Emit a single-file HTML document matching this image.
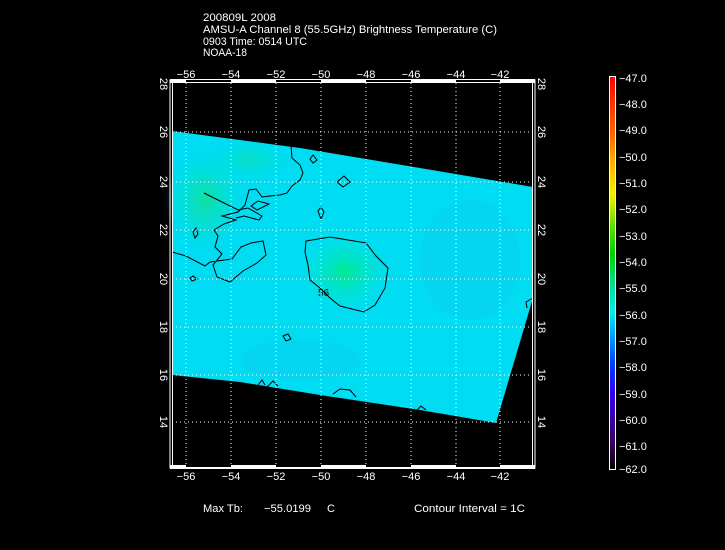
<!DOCTYPE html>
<html><head><style>
body{margin:0;background:#000;}
svg{display:block}
text{font-family:"Liberation Sans",sans-serif;fill:#fff;font-size:11px}
</style></head><body>
<svg width="725" height="550" viewBox="0 0 725 550" xmlns="http://www.w3.org/2000/svg">
<defs>
<linearGradient id="cb" x1="0" y1="1" x2="0" y2="0">
<stop offset="0" stop-color="#000000"/>
<stop offset="0.07" stop-color="#3a0060"/>
<stop offset="0.2" stop-color="#3000ff"/>
<stop offset="0.27" stop-color="#0040ff"/>
<stop offset="0.34" stop-color="#00a0ff"/>
<stop offset="0.4" stop-color="#00f0f0"/>
<stop offset="0.47" stop-color="#00e090"/>
<stop offset="0.55" stop-color="#00d000"/>
<stop offset="0.62" stop-color="#60e000"/>
<stop offset="0.7" stop-color="#f0f000"/>
<stop offset="0.78" stop-color="#ffb000"/>
<stop offset="0.86" stop-color="#ff6000"/>
<stop offset="1" stop-color="#ff0000"/>
</linearGradient>
<radialGradient id="blob" cx="0.5" cy="0.5" r="0.5">
<stop offset="0" stop-color="#00e890"/><stop offset="1" stop-color="#00e8c8" stop-opacity="0"/>
</radialGradient>
<radialGradient id="blob2" cx="0.5" cy="0.5" r="0.5">
<stop offset="0" stop-color="#10e0a0"/><stop offset="1" stop-color="#00e0d0" stop-opacity="0"/>
</radialGradient>
</defs>
<text x="203" y="21" textLength="73" lengthAdjust="spacingAndGlyphs">200809L 2008</text>
<text x="203" y="33" textLength="294" lengthAdjust="spacingAndGlyphs">AMSU-A Channel 8 (55.5GHz) Brightness Temperature (C)</text>
<text x="203" y="45" textLength="104" lengthAdjust="spacingAndGlyphs">0903 Time: 0514 UTC</text>
<text x="203" y="56" textLength="44" lengthAdjust="spacingAndGlyphs">NOAA-18</text>

<polygon points="172,131 300,148 420,168 533,187 533,298 496,423 420,410 320,395 240,382 172,375" fill="#00dcf2"/>
<ellipse cx="345" cy="272" rx="45" ry="38" fill="url(#blob)"/>
<ellipse cx="205" cy="200" rx="40" ry="50" fill="url(#blob2)"/>
<ellipse cx="250" cy="160" rx="40" ry="20" fill="url(#blob2)" opacity="0.6"/>
<ellipse cx="470" cy="260" rx="50" ry="60" fill="#10c8f0" opacity="0.35"/>
<ellipse cx="300" cy="360" rx="60" ry="20" fill="#10c8f0" opacity="0.35"/>

<g fill="none" stroke="#000" stroke-width="1">
<polygon points="306,241 330,237 366,243 376,256 388,268 385,288 375,305 364,312 352,309 340,306 330,298 320,288 310,280 308,265 305,252"/>
<polyline points="172,252 186,256 205,266 210,262 232,259 241,247 251,243 263,241 266,255 257,263 243,271 230,282 217,277 213,265 222,254 215,247 218,236 214,230 224,224 236,220 222,216 238,212 245,205 249,190 256,189 262,197 270,196 280,195 287,193 292,186 300,180 303,173 300,165 292,158 291,146"/>
<polyline points="204,193 222,202 238,210 248,208 262,216 259,220 244,216 236,218"/>
<polygon points="251,206 258,201 269,204 257,210"/>
<polygon points="310,159 313,155 317,160 313,163"/>
<polygon points="318,211 321,207 324,212 321,219"/>
<polygon points="193,232 196,228 198,234 195,238"/>
<polygon points="190,278 193,276 197,279 192,281"/>
<polygon points="283,336 288,334 291,339 286,341"/>
<polygon points="337,182 344,176 350,182 343,187"/>
<polyline points="258,385 262,380 265,385"/>
<polyline points="267,387 273,381 278,386"/>
<polyline points="333,394 340,389 350,390 356,397"/>
<polyline points="417,410 421,406 426,410"/>
<polyline points="533,298 526,302 527,308"/>
</g>
<text x="318" y="296" style="font-size:10px;fill:#000">56</text>

<g stroke="#fff" stroke-dasharray="1,3" stroke-width="1">
<line x1="186" y1="83" x2="186" y2="465"/><line x1="231" y1="83" x2="231" y2="465"/>
<line x1="276" y1="83" x2="276" y2="465"/><line x1="321" y1="83" x2="321" y2="465"/>
<line x1="366" y1="83" x2="366" y2="465"/><line x1="411" y1="83" x2="411" y2="465"/>
<line x1="456" y1="83" x2="456" y2="465"/><line x1="500" y1="83" x2="500" y2="465"/>
<line x1="172" y1="132" x2="533" y2="132"/><line x1="172" y1="182" x2="533" y2="182"/>
<line x1="172" y1="230" x2="533" y2="230"/><line x1="172" y1="279" x2="533" y2="279"/>
<line x1="172" y1="327" x2="533" y2="327"/><line x1="172" y1="375" x2="533" y2="375"/>
<line x1="172" y1="422" x2="533" y2="422"/>
</g>
<rect x="170" y="80" width="365" height="388" fill="none" stroke="#fff" stroke-width="1"/>
<rect x="172.5" y="82.5" width="360" height="383" fill="none" stroke="#fff" stroke-width="1"/>
<rect x="170" y="465" width="365" height="4" fill="#fff"/>
<rect x="170" y="79" width="365" height="4" fill="#fff"/>
<g stroke="#000" stroke-width="2">
<line x1="186" y1="466" x2="231" y2="466"/><line x1="276" y1="466" x2="321" y2="466"/>
<line x1="366" y1="466" x2="411" y2="466"/><line x1="456" y1="466" x2="500" y2="466"/>
<line x1="186" y1="81" x2="231" y2="81"/><line x1="276" y1="81" x2="321" y2="81"/>
<line x1="366" y1="81" x2="411" y2="81"/><line x1="456" y1="81" x2="500" y2="81"/>
</g>
<g text-anchor="middle">
<text x="186" y="78">−56</text><text x="231" y="78">−54</text><text x="276" y="78">−52</text><text x="321" y="78">−50</text>
<text x="366" y="78">−48</text><text x="411" y="78">−46</text><text x="456" y="78">−44</text><text x="500" y="78">−42</text>
<text x="186" y="480">−56</text><text x="231" y="480">−54</text><text x="276" y="480">−52</text><text x="321" y="480">−50</text>
<text x="366" y="480">−48</text><text x="411" y="480">−46</text><text x="456" y="480">−44</text><text x="500" y="480">−42</text>
</g>
<g text-anchor="middle">
<text transform="translate(160,84) rotate(90)">28</text><text transform="translate(160,132) rotate(90)">26</text>
<text transform="translate(160,182) rotate(90)">24</text><text transform="translate(160,230) rotate(90)">22</text>
<text transform="translate(160,279) rotate(90)">20</text><text transform="translate(160,327) rotate(90)">18</text>
<text transform="translate(160,375) rotate(90)">16</text><text transform="translate(160,422) rotate(90)">14</text>
<text transform="translate(538,84) rotate(90)">28</text><text transform="translate(538,132) rotate(90)">26</text>
<text transform="translate(538,182) rotate(90)">24</text><text transform="translate(538,230) rotate(90)">22</text>
<text transform="translate(538,279) rotate(90)">20</text><text transform="translate(538,327) rotate(90)">18</text>
<text transform="translate(538,375) rotate(90)">16</text><text transform="translate(538,422) rotate(90)">14</text>
</g>

<rect x="609.5" y="76.5" width="6" height="393" fill="url(#cb)" stroke="#fff" stroke-width="1"/>
<g>
<text x="619" y="82">−47.0</text><text x="619" y="108">−48.0</text><text x="619" y="134">−49.0</text>
<text x="619" y="161">−50.0</text><text x="619" y="187">−51.0</text><text x="619" y="213">−52.0</text>
<text x="619" y="240">−53.0</text><text x="619" y="266">−54.0</text><text x="619" y="292">−55.0</text>
<text x="619" y="319">−56.0</text><text x="619" y="345">−57.0</text><text x="619" y="371">−58.0</text>
<text x="619" y="398">−59.0</text><text x="619" y="424">−60.0</text><text x="619" y="450">−61.0</text>
<text x="619" y="473">−62.0</text>
</g>

<text x="203" y="512" textLength="40" lengthAdjust="spacingAndGlyphs">Max Tb:</text>
<text x="264" y="512" textLength="47" lengthAdjust="spacingAndGlyphs">−55.0199</text>
<text x="327" y="512">C</text>
<text x="414" y="512" textLength="111" lengthAdjust="spacingAndGlyphs">Contour Interval = 1C</text>
</svg>
</body></html>
